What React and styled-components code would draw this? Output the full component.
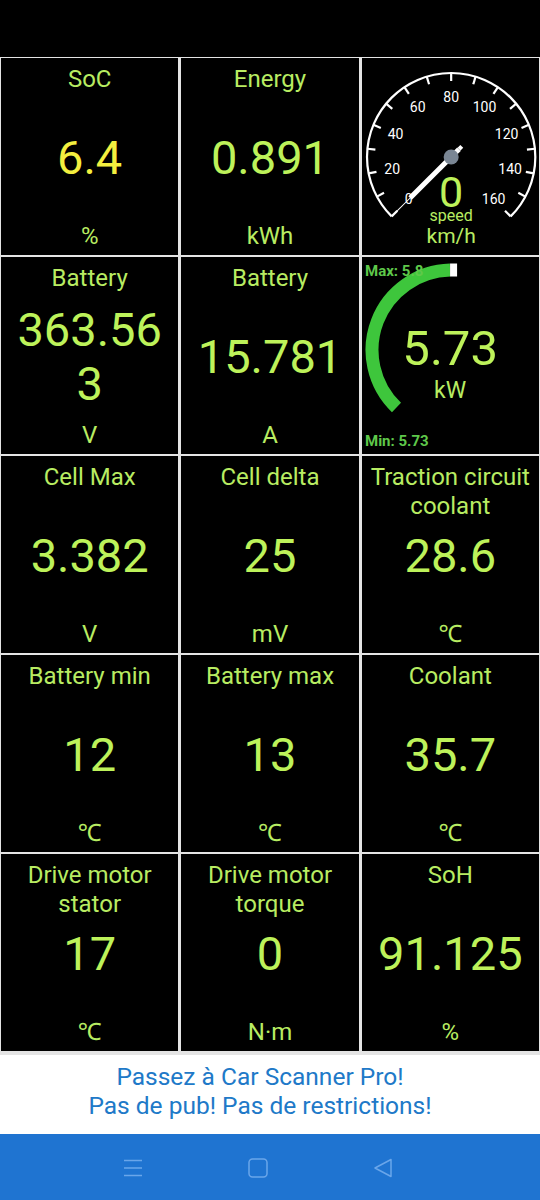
import React from 'react';
import styled, { createGlobalStyle } from 'styled-components';

const Global = createGlobalStyle`
  html, body { margin: 0; padding: 0; background: #fff; }
  body { font-family: Roboto, "Noto Sans", sans-serif; }
`;

const Screen = styled.div`
  width: 540px;
  height: 1200px;
  display: flex;
  flex-direction: column;
  background: #fff;
  overflow: hidden;
`;

const StatusBar = styled.div`
  height: 57px;
  flex: none;
  background: #000;
`;

const Grid = styled.div`
  flex: none;
  display: grid;
  grid-template-columns: repeat(3, 1fr);
  grid-auto-rows: 197px;
  column-gap: 3px;
  row-gap: 2px;
  padding: 1px 1px 4px;
  background: #e4e4e4;
`;

const Cell = styled.div`
  background: #000;
  display: grid;
  grid-template-rows: 1fr auto 1fr;
  justify-items: center;
  text-align: center;
  color: #b8ec62;
  overflow: hidden;
`;

const Label = styled.div`
  align-self: start;
  padding: 7px 3px 0;
  font-size: 24px;
  line-height: 29px;
`;

const Value = styled.div`
  padding-top: 3px;
  max-width: 160px;
  word-break: break-all;
  font-size: 47px;
  line-height: 54px;
  color: ${(p) => (p.$yellow ? '#f3ef3f' : '#bdf25a')};
`;

const Unit = styled.div`
  align-self: end;
  padding-bottom: 4px;
  font-size: 24px;
  line-height: 29px;
`;

const GaugeCell = styled.div`
  background: #000;
  overflow: hidden;
  svg {
    display: block;
    width: 100%;
    height: 100%;
  }
`;

const Ad = styled.div`
  flex: 1;
  display: flex;
  flex-direction: column;
  align-items: center;
  padding: 7px 20px 0 0;
  color: #2079c8;
  font-size: 24.5px;
  line-height: 29px;
`;

const NavBar = styled.div`
  height: 66px;
  flex: none;
  background: #1f74d1;
  display: flex;
  align-items: center;
  justify-content: center;
  padding-right: 24px;
`;

const NavSlot = styled.div`
  width: 125px;
  display: flex;
  justify-content: center;
  align-items: center;
  padding-top: 2px;
`;

const rad = (d) => (d * Math.PI) / 180;
const pt = (cx, cy, r, deg) => [cx + r * Math.cos(rad(deg)), cy - r * Math.sin(rad(deg))];

function Speedometer() {
  const cx = 89;
  const cy = 99;
  const r = 84;
  const ang = (v) => 225 - (v * 270) / 160;
  const [sx, sy] = pt(cx, cy, r, 225);
  const [ex, ey] = pt(cx, cy, r, -45);
  const ticks = [];
  for (let v = 0; v <= 160; v += 10) {
    const a = ang(v);
    const [x1, y1] = pt(cx, cy, r, a);
    const [x2, y2] = pt(cx, cy, r - 8, a);
    ticks.push(<line key={v} x1={x1} y1={y1} x2={x2} y2={y2} stroke="#fff" strokeWidth="2.2" />);
  }
  const labels = [];
  for (let v = 0; v <= 160; v += 20) {
    const [x, y] = pt(cx, cy, 60, ang(v));
    labels.push(
      <text key={v} x={x} y={y} fill="#fff" fontSize="14" textAnchor="middle" dominantBaseline="central" fontFamily="Roboto, sans-serif">
        {v}
      </text>
    );
  }
  const na = ang(0);
  const [n1x, n1y] = pt(cx, cy, 58, na);
  const [n2x, n2y] = pt(cx, cy, 78, na);
  const [b1x, b1y] = pt(cx, cy, 11, na + 180);
  const [b2x, b2y] = pt(cx, cy, 15, na + 180);
  return (
    <svg viewBox="0 0 177 197" preserveAspectRatio="none">
      <path d={`M${sx} ${sy} A${r} ${r} 0 1 1 ${ex} ${ey}`} fill="none" stroke="#fff" strokeWidth="2.2" />
      {ticks}
      {labels}
      <text x={cx} y="149" fill="#bdf25a" fontSize="43" textAnchor="middle" fontFamily="Roboto, sans-serif">0</text>
      <text x={cx} y="163" fill="#b8ec62" fontSize="16" textAnchor="middle" fontFamily="Roboto, sans-serif">speed</text>
      <text x={cx} y="185" fill="#b8ec62" fontSize="21" textAnchor="middle" fontFamily="Roboto, sans-serif">km/h</text>
      <line x1={cx} y1={cy} x2={n1x} y2={n1y} stroke="#fff" strokeWidth="5" />
      <line x1={n1x} y1={n1y} x2={n2x} y2={n2y} stroke="#fff" strokeWidth="1" />
      <line x1={cx} y1={cy} x2={b1x} y2={b1y} stroke="#fff" strokeWidth="5" />
      <line x1={b1x} y1={b1y} x2={b2x} y2={b2y} stroke="#fff" strokeWidth="4" />
      <circle cx={cx} cy={cy} r="7.5" fill="#7a8694" />
    </svg>
  );
}

function PowerGauge() {
  const cx = 90;
  const cy = 93;
  const r = 80;
  const [sx, sy] = pt(cx, cy, r, 226);
  const [ex, ey] = pt(cx, cy, r, 91.5);
  return (
    <svg viewBox="0 0 177 197" preserveAspectRatio="none">
      <path d={`M${sx} ${sy} A${r} ${r} 0 0 1 ${ex} ${ey}`} fill="none" stroke="#3ec63c" strokeWidth="13" />
      <rect x={ex} y={cy - r - 6.5} width="7" height="13" fill="#fff" />
      <text x="3" y="19" fill="#5ec84a" fontSize="15" fontWeight="bold" fontFamily="Roboto, sans-serif">Max: 5.8</text>
      <text x="3" y="189" fill="#5ec84a" fontSize="15" fontWeight="bold" fontFamily="Roboto, sans-serif">Min: 5.73</text>
      <text x="88" y="108" fill="#bdf25a" fontSize="49" textAnchor="middle" fontFamily="Roboto, sans-serif">5.73</text>
      <text x="88" y="141" fill="#b8ec62" fontSize="23" textAnchor="middle" fontFamily="Roboto, sans-serif">kW</text>
    </svg>
  );
}

function Tile({ label, value, unit, yellow }) {
  return (
    <Cell>
      <Label>{label}</Label>
      <Value $yellow={yellow}>{value}</Value>
      <Unit>{unit}</Unit>
    </Cell>
  );
}

const NAV = '#6aa6ea';

export default function App() {
  return (
    <Screen>
      <Global />
      <StatusBar />
      <Grid>
        <Tile label="SoC" value="6.4" unit="%" yellow />
        <Tile label="Energy" value="0.891" unit="kWh" />
        <GaugeCell><Speedometer /></GaugeCell>

        <Tile label="Battery" value="363.563" unit="V" />
        <Tile label="Battery" value="15.781" unit="A" />
        <GaugeCell><PowerGauge /></GaugeCell>

        <Tile label="Cell Max" value="3.382" unit="V" />
        <Tile label="Cell delta" value="25" unit="mV" />
        <Tile label="Traction circuit coolant" value="28.6" unit="℃" />

        <Tile label="Battery min" value="12" unit="℃" />
        <Tile label="Battery max" value="13" unit="℃" />
        <Tile label="Coolant" value="35.7" unit="℃" />

        <Tile label="Drive motor stator" value="17" unit="℃" />
        <Tile label="Drive motor torque" value="0" unit="N·m" />
        <Tile label="SoH" value="91.125" unit="%" />
      </Grid>
      <Ad>
        <div>Passez à Car Scanner Pro!</div>
        <div>Pas de pub! Pas de restrictions!</div>
      </Ad>
      <NavBar>
        <NavSlot>
          <svg width="20" height="18" viewBox="0 0 20 18">
            <path d="M1 1.5h18M1 9h18M1 16.5h18" stroke={NAV} strokeWidth="1.5" />
          </svg>
        </NavSlot>
        <NavSlot>
          <svg width="20" height="20" viewBox="0 0 20 20">
            <rect x="1" y="1" width="18" height="18" rx="3.5" fill="none" stroke={NAV} strokeWidth="1.5" />
          </svg>
        </NavSlot>
        <NavSlot>
          <svg width="20" height="20" viewBox="0 0 20 20">
            <path d="M18 1.5L2 10L18 18.5Z" fill="none" stroke={NAV} strokeWidth="1.5" strokeLinejoin="round" />
          </svg>
        </NavSlot>
      </NavBar>
    </Screen>
  );
}
